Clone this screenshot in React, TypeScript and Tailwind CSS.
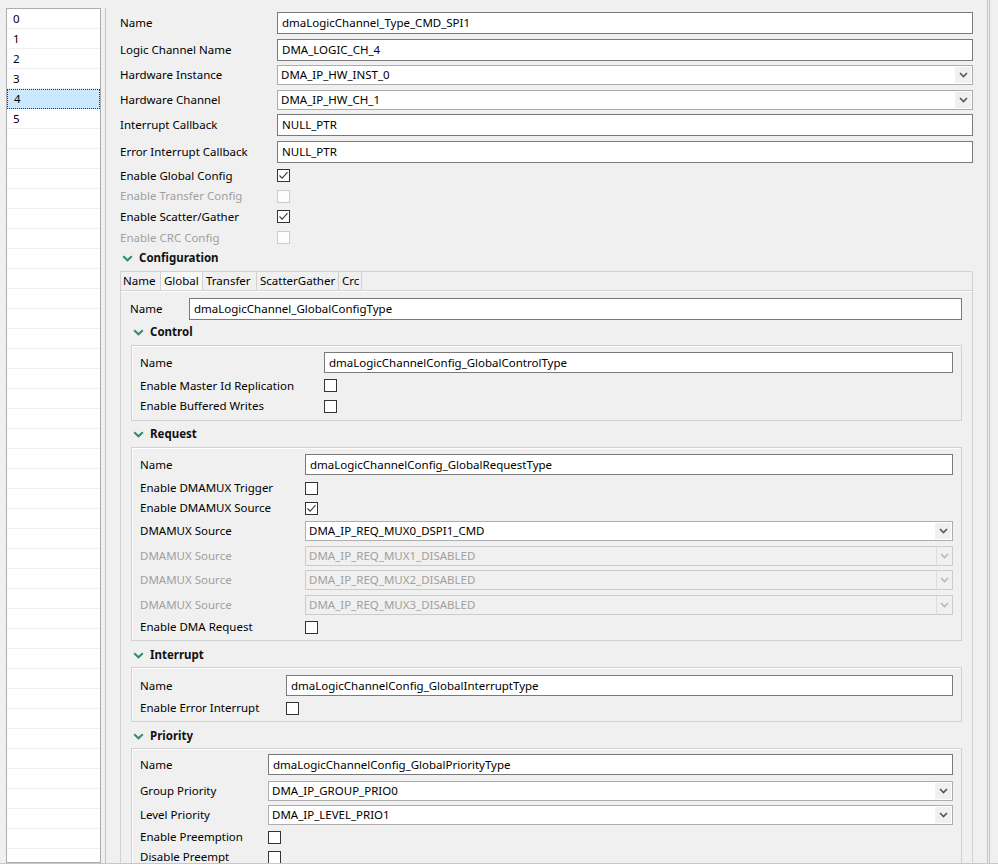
import React from "react";

const Check = () => (
  <svg width="11" height="11" viewBox="0 0 11 11" className="block">
    <path d="M1.5 5.5 L4.2 8.2 L9.5 2.2" fill="none" stroke="#3c3c3c" strokeWidth="1.1" />
  </svg>
);

const Chk = ({ checked = false, disabled = false }: { checked?: boolean; disabled?: boolean }) => (
  <span
    className={
      "w-[13px] h-[13px] shrink-0 border flex items-center justify-center " +
      (disabled ? "border-[#cccccc] bg-[#fcfcfc]" : "border-[#333333] bg-white")
    }
  >
    {checked ? <Check /> : null}
  </span>
);

const Caret = ({ disabled = false }: { disabled?: boolean }) => (
  <svg width="9" height="6" viewBox="0 0 9 6" className="block">
    <path d="M1 1 L4.5 4.5 L8 1" fill="none" stroke={disabled ? "#b8b8b8" : "#555555"} strokeWidth="1.6" />
  </svg>
);

const TextBox = ({ value, h = "h-[22px]" }: { value: string; h?: string }) => (
  <div className={"flex-1 shrink-0 " + h + " border border-[#7a7a7a] bg-white flex items-center pl-[4px] text-black"}>
    {value}
  </div>
);

const Select = ({ value, disabled = false }: { value: string; disabled?: boolean }) => (
  <div
    className={
      "flex-1 h-[20px] shrink-0 border flex items-stretch " +
      (disabled ? "border-[#cccccc] bg-[#f0f0f0] text-[#a0a0a0]" : "border-[#adadad] bg-white text-black")
    }
  >
    <span className="flex-1 flex items-center pl-[3px]">{value}</span>
    <span
      className={
        "w-[16px] flex items-center justify-center " +
        (disabled ? "border-l border-[#dcdcdc] bg-[#f0f0f0]" : "bg-[#f0f0f0] my-px mr-px")
      }
    >
      <Caret disabled={disabled} />
    </span>
  </div>
);

const Label = ({ text, w, disabled = false }: { text: string; w: string; disabled?: boolean }) => (
  <span className={w + " shrink-0 whitespace-nowrap " + (disabled ? "text-[#a0a0a0]" : "text-black")}>{text}</span>
);

const Header = ({ text, cls = "" }: { text: string; cls?: string }) => (
  <div className={"flex items-center h-[20px] shrink-0 " + cls}>
    <svg width="11" height="7" viewBox="0 0 11 7" className="block mr-[6px]">
      <path d="M1.2 1.2 L5.5 5.3 L9.8 1.2" fill="none" stroke="#2f8a78" strokeWidth="2" />
    </svg>
    <span className="font-bold text-[#111111]">{text}</span>
  </div>
);

const CbRow = ({
  text,
  w,
  checked = false,
  disabled = false,
  h = "h-[20px]",
  cls = "",
}: {
  text: string;
  w: string;
  checked?: boolean;
  disabled?: boolean;
  h?: string;
  cls?: string;
}) => (
  <div className={"flex items-center shrink-0 " + h + " " + cls}>
    <Label text={text} w={w} disabled={disabled} />
    <Chk checked={checked} disabled={disabled} />
  </div>
);

export default function App() {
  const rows = Array.from({ length: 43 }, (_, i) => i);
  return (
    <div className="w-[998px] h-[867px] bg-[#f0f0f0] overflow-hidden flex flex-col font-['Noto_Sans',sans-serif] text-[11.5px] leading-none">
      <div className="h-[863px] shrink-0 flex overflow-hidden">
        {/* left list */}
        <div className="pl-[6px] pt-[8px] flex">
          <div className="w-[95px] border border-[#adadad] bg-white overflow-hidden">
            {rows.map((i) => (
              <div
                key={i}
                className={
                  "h-[20px] flex items-center pl-[6px] " +
                  (i === 4
                    ? "bg-[#cce8ff] border border-dotted border-[#333333]"
                    : "border-b border-[#f0f0f0]")
                }
              >
                {i < 6 ? <span className="text-black">{i}</span> : null}
              </div>
            ))}
          </div>
        </div>
        <div className="ml-[4px] pt-[8px] flex">
          <div className="w-px bg-[#c4c4c4]" />
        </div>

        {/* main */}
        <div className="w-[881px] px-[14px] pt-[12px] flex flex-col *:shrink-0">
          <div className="flex items-center">
            <Label text="Name" w="w-[157px]" />
            <TextBox value="dmaLogicChannel_Type_CMD_SPI1" />
          </div>
          <div className="flex items-center mt-[5px]">
            <Label text="Logic Channel Name" w="w-[157px]" />
            <TextBox value="DMA_LOGIC_CH_4" />
          </div>
          <div className="flex items-center mt-[4px]">
            <Label text="Hardware Instance" w="w-[157px]" />
            <Select value="DMA_IP_HW_INST_0" />
          </div>
          <div className="flex items-center mt-[5px]">
            <Label text="Hardware Channel" w="w-[157px]" />
            <Select value="DMA_IP_HW_CH_1" />
          </div>
          <div className="flex items-center mt-[4px]">
            <Label text="Interrupt Callback" w="w-[157px]" />
            <TextBox value="NULL_PTR" />
          </div>
          <div className="flex items-center mt-[5px]">
            <Label text="Error Interrupt Callback" w="w-[157px]" />
            <TextBox value="NULL_PTR" />
          </div>
          <div className="mt-[2px]">
            <CbRow text="Enable Global Config" w="w-[157px]" checked h="h-[21px]" />
            <CbRow text="Enable Transfer Config" w="w-[157px]" disabled />
            <CbRow text="Enable Scatter/Gather" w="w-[157px]" checked h="h-[21px]" />
            <CbRow text="Enable CRC Config" w="w-[157px]" disabled h="h-[21px]" />
          </div>
          <Header text="Configuration" cls="ml-[2px]" />

          {/* tab folder */}
          <div className="mt-[3px] flex-1 border border-b-0 border-[#d2d2d2] rounded-tr-[3px] flex flex-col *:shrink-0">
            <div className="h-[19px] flex border-b border-[#d2d2d2]">
              <div className="w-[40px] border-r border-[#d2d2d2] flex items-center pl-[2px] text-black">Name</div>
              <div className="w-[42px] border-r border-[#d2d2d2] bg-[#f7f7f7] flex items-center pl-[3px] text-black">Global</div>
              <div className="w-[54px] border-r border-[#d2d2d2] flex items-center pl-[3px] text-black">Transfer</div>
              <div className="w-[82px] border-r border-[#d2d2d2] flex items-center pl-[3px] text-black">ScatterGather</div>
              <div className="w-[23px] border-r border-[#d2d2d2] flex items-center pl-[3px] text-black">Crc</div>
              <div className="flex-1" />
            </div>
            <div className="flex-1 border-t border-white pl-[9px] pr-[10px] flex flex-col *:shrink-0">
              <div className="flex items-center mt-[6px]">
                <Label text="Name" w="w-[59px]" />
                <TextBox value="dmaLogicChannel_GlobalConfigType" />
              </div>

              {/* Control */}
              <Header text="Control" cls="mt-[2px] ml-[3px]" />
              <div className="mt-[3px] ml-px border border-[#d0d0d0] shadow-[inset_1px_1px_0_#ffffff] pl-[8px] pr-[8px] pt-[6px] pb-[4px]">
                <div className="flex items-center">
                  <Label text="Name" w="w-[184px]" />
                  <TextBox value="dmaLogicChannelConfig_GlobalControlType" h="h-[21px]" />
                </div>
                <CbRow text="Enable Master Id Replication" w="w-[184px]" h="h-[21px]" cls="mt-[2px]" />
                <CbRow text="Enable Buffered Writes" w="w-[184px]" h="h-[20px]" />
              </div>

              {/* Request */}
              <Header text="Request" cls="mt-[3px] ml-[3px]" />
              <div className="mt-[3px] ml-px border border-[#d0d0d0] shadow-[inset_1px_1px_0_#ffffff] pl-[8px] pr-[8px] pt-[6px] pb-[3px]">
                <div className="flex items-center">
                  <Label text="Name" w="w-[165px]" />
                  <TextBox value="dmaLogicChannelConfig_GlobalRequestType" h="h-[21px]" />
                </div>
                <CbRow text="Enable DMAMUX Trigger" w="w-[165px]" cls="mt-[3px]" />
                <CbRow text="Enable DMAMUX Source" w="w-[165px]" checked />
                <div className="flex items-center mt-[3px]">
                  <Label text="DMAMUX Source" w="w-[165px]" />
                  <Select value="DMA_IP_REQ_MUX0_DSPI1_CMD" />
                </div>
                <div className="flex items-center mt-[5px]">
                  <Label text="DMAMUX Source" w="w-[165px]" disabled />
                  <Select value="DMA_IP_REQ_MUX1_DISABLED" disabled />
                </div>
                <div className="flex items-center mt-[4px]">
                  <Label text="DMAMUX Source" w="w-[165px]" disabled />
                  <Select value="DMA_IP_REQ_MUX2_DISABLED" disabled />
                </div>
                <div className="flex items-center mt-[5px]">
                  <Label text="DMAMUX Source" w="w-[165px]" disabled />
                  <Select value="DMA_IP_REQ_MUX3_DISABLED" disabled />
                </div>
                <CbRow text="Enable DMA Request" w="w-[165px]" cls="mt-[2px]" />
              </div>

              {/* Interrupt */}
              <Header text="Interrupt" cls="mt-[4px] ml-[3px]" />
              <div className="mt-[2px] ml-px border border-[#d0d0d0] shadow-[inset_1px_1px_0_#ffffff] pl-[8px] pr-[8px] pt-[7px] pb-[3px]">
                <div className="flex items-center">
                  <Label text="Name" w="w-[146px]" />
                  <TextBox value="dmaLogicChannelConfig_GlobalInterruptType" h="h-[21px]" />
                </div>
                <CbRow text="Enable Error Interrupt" w="w-[146px]" cls="mt-[2px]" />
              </div>

              {/* Priority */}
              <Header text="Priority" cls="mt-[4px] ml-[3px]" />
              <div className="mt-[2px] ml-px flex-1 border border-b-0 border-[#d0d0d0] shadow-[inset_1px_1px_0_#ffffff] pl-[8px] pr-[8px] pt-[5px]">
                <div className="flex items-center">
                  <Label text="Name" w="w-[128px]" />
                  <TextBox value="dmaLogicChannelConfig_GlobalPriorityType" h="h-[21px]" />
                </div>
                <div className="flex items-center mt-[6px]">
                  <Label text="Group Priority" w="w-[128px]" />
                  <Select value="DMA_IP_GROUP_PRIO0" />
                </div>
                <div className="flex items-center mt-[4px]">
                  <Label text="Level Priority" w="w-[128px]" />
                  <Select value="DMA_IP_LEVEL_PRIO1" />
                </div>
                <CbRow text="Enable Preemption" w="w-[128px]" cls="mt-[2px]" />
                <CbRow text="Disable Preempt" w="w-[128px]" />
              </div>
            </div>
          </div>
        </div>

        {/* right edge lines */}
        <div className="w-px bg-[#c4c4c4]" />
        <div className="w-px bg-[#f0f0f0]" />
        <div className="w-px bg-[#c4c4c4]" />
        <div className="flex-1" />
      </div>
      <div className="h-[4px] shrink-0 border-t border-[#c8c8c8] bg-white" />
    </div>
  );
}
